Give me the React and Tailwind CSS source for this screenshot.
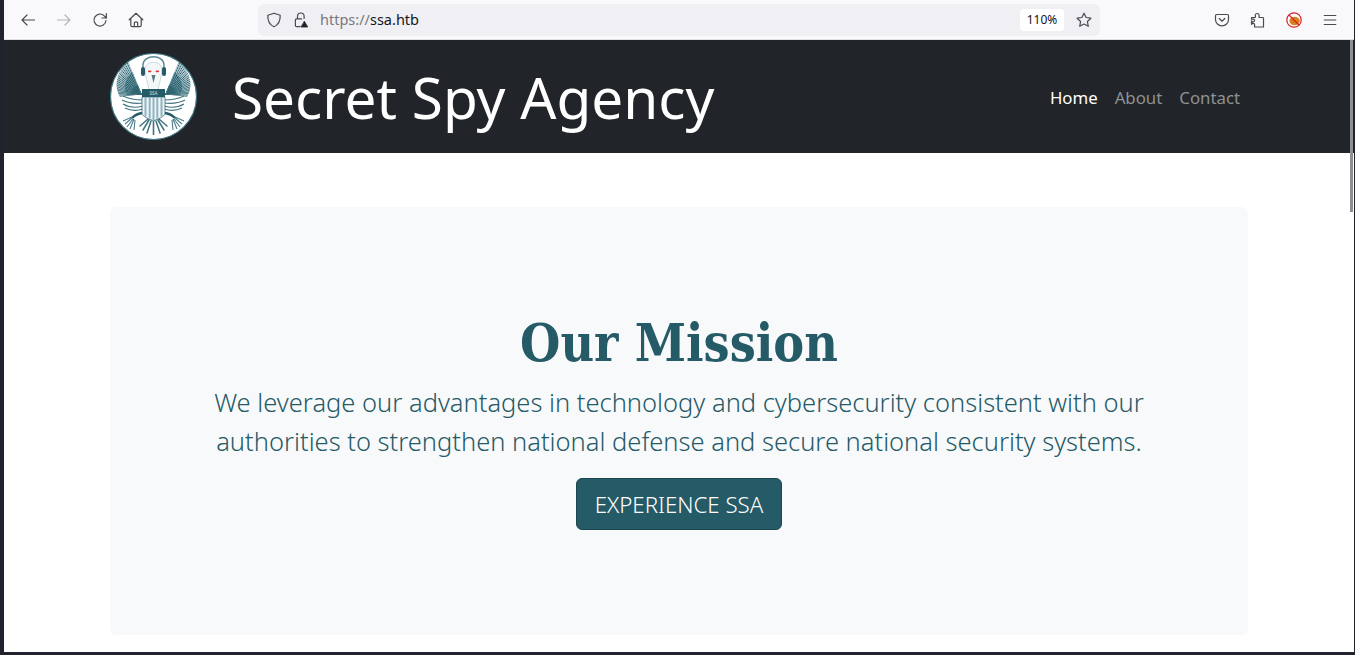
import React from "react";

const S = { fontFamily: '"Noto Sans", sans-serif' };

function wing() {
  const out = [];
  const bx = 31, by = 41;
  const layers = [
    { n: 20, a0: 186, a1: 112, len: (k) => 21 + 13 * k, w: 1.0, c: ["#2f6573", "#a3c0c8"] },
    { n: 14, a0: 180, a1: 112, len: (k) => 14 + 9 * k, w: 1.0, c: ["#1f5361", "#6d99a4"] },
    { n: 9, a0: 175, a1: 112, len: () => 9, w: 1.1, c: ["#255a67", "#3f7480"] },
  ];
  layers.forEach((l, li) => {
    for (let i = 0; i < l.n * 2; i++) {
      const k = i / (l.n * 2 - 1);
      const a = ((l.a0 + (l.a1 - l.a0) * k) * Math.PI) / 180;
      const L = l.len(k);
      const x = bx + Math.cos(a) * L;
      const y = by - Math.sin(a) * L;
      out.push(<line key={`${li}-${i}`} x1={bx} y1={by} x2={x.toFixed(2)} y2={y.toFixed(2)} stroke={l.c[i % 2]} strokeWidth={l.w} strokeLinecap="round" />);
    }
  });
  return out;
}

function Eagle() {
  const t = "#255a67";
  const w = wing();
  const side = (
    <g>
      {w}
      <path d="M33 47 C26 47 19 46 13 43 M33 50 C25 51 18 50 12 47 M33 53 C26 55 18 54 13 51 M33 56 C27 58 21 58 15 55" fill="none" stroke="#3f7480" strokeWidth="1.2" />
      <path d="M34 60 C29 60 25 62 22 65" fill="none" stroke={t} strokeWidth="2.4" />
      <path d="M22 64 L13 68 M22 65 L15 71 M23 66 L17 74 M24 66 L20 76 M25 67 L24 77" stroke="#4b7d89" strokeWidth="1.1" />
      <path d="M38 66 L30 73 M39 67 L33 77 M41 68 L37 80" stroke="#3f7480" strokeWidth="1.5" strokeLinecap="round" />
    </g>
  );
  return (
    <svg viewBox="0 0 87 87" className="w-[87px] h-[87px] shrink-0">
      <circle cx="43.5" cy="43.5" r="43" fill="#fff" stroke="#3f7480" strokeWidth="1.2" />
      {side}
      <g transform="matrix(-1 0 0 1 87 0)">{side}</g>
      <path d="M43.5 68 V82" stroke="#3f7480" strokeWidth="1.6" />
      <path d="M33 12 C33 1 54 1 54 12 V17" fill="none" stroke="#5f8a95" strokeWidth="1.5" />
      <path d="M33 12 V17" stroke="#5f8a95" strokeWidth="1.5" />
      <path d="M35 16 C36 7 51 7 52 16 C52 24 49 30 48 37 L39 37 C38 30 35 24 35 16 Z" fill="#f4f7f8" stroke="#b8ccd1" strokeWidth=".7" />
      <rect x="31" y="14" width="4" height="9" rx="2" fill={t} />
      <rect x="52" y="14" width="4" height="9" rx="2" fill={t} />
      <rect x="38" y="17.5" width="3.4" height="1.8" rx=".8" fill="#e2343c" />
      <rect x="45.6" y="17.5" width="3.4" height="1.8" rx=".8" fill="#e2343c" />
      <path d="M41.5 22 L45.5 22 L43.5 30 Z" fill="#5d7780" />
      <rect x="32" y="36" width="23" height="8" fill={t} />
      <text x="43.5" y="42" textAnchor="middle" fontSize="4.6" fill="#cfe0e4" style={S}>SSA</text>
      <path d="M32 44 H55 V60 C55 64 47 66 43.5 68 C40 66 32 64 32 60 Z" fill="#eef4f6" stroke={t} strokeWidth=".7" />
      <path d="M35.5 44 V63.5 M39.7 44 V65.5 M43.5 44 V67.5 M47.3 44 V65.5 M51.5 44 V63.5" stroke="#8fb4c0" strokeWidth="2" />
    </svg>
  );
}

const Ico = ({ children, className = "" }) => (
  <svg viewBox="0 0 16 16" fill="none" stroke="#4a4a4f" strokeWidth="1.2" strokeLinecap="round" strokeLinejoin="round" className={`w-4 h-4 shrink-0 ${className}`}>
    {children}
  </svg>
);

function Toolbar() {
  return (
    <div className="h-[39px] bg-[#f9f9fb] flex items-center pl-4 border-b border-[#e0e0e2] box-content shrink-0">
      <div className="flex items-center gap-5 w-[132px]">
        <Ico><path d="M14.5 8H2M7 3 2 8l5 5" /></Ico>
        <Ico><path d="M1.5 8H14M9 3l5 5-5 5" stroke="#b4b4b8" /></Ico>
        <Ico><path d="M14 8.5a6 6 0 1 1-1.7-4.7L14.2 6M14.4 1.5V6H10" /></Ico>
        <Ico><path d="M1.2 7.8 8 1.3l6.8 6.5M2.8 6.6v6.7c0 .8.5 1.4 1.4 1.4h7.6c.9 0 1.4-.6 1.4-1.4V6.6M6.3 14.7v-3.4c0-2 3.4-2 3.4 0v3.4" /></Ico>
      </div>
      <div className="ml-[106px] w-[842px] h-[32px] bg-[#f0f0f4] rounded-md flex items-center pl-2 pr-2">
        <Ico><path d="M8 1.2 14.2 3.2c.2 5.4-1.3 9.4-6.2 11.6-4.9-2.2-6.4-6.2-6.2-11.6Z" /></Ico>
        <Ico className="ml-[11px]"><path d="M4.5 7V4.3a3.3 3.3 0 0 1 6.6 0V6.5M7 14.6H3.6c-.8 0-1.2-.4-1.2-1.1V8c0-.7.4-1.1 1.2-1.1h5" /><path d="M11.5 9.5 14.7 15H8.3Z" fill="#222" stroke="#222" strokeWidth=".8" /></Ico>
        <span className="ml-[11px] text-[14.5px] text-[#77777c] leading-none" style={S}>https://<span className="text-[#15141a]">ssa.htb</span></span>
        <div className="ml-auto flex items-center gap-3">
          <span className="w-[44px] h-[22px] bg-white rounded flex items-center justify-center text-[12px] text-[#15141a]" style={S}>110%</span>
          <Ico><path d="m8 1.2 2.1 4.3 4.8.7-3.5 3.3.9 4.8L8 12l-4.3 2.3.9-4.8L1.1 6.2l4.8-.7Z" /></Ico>
        </div>
      </div>
      <div className="flex items-center ml-[114px]">
        <Ico><path d="M2.8 2.5h10.4c.8 0 1.3.5 1.3 1.3v3.6a6.5 6.5 0 0 1-13 0V3.8c0-.8.5-1.3 1.3-1.3ZM5.2 6.5 8 9.2l2.8-2.7" /></Ico>
        <Ico className="ml-[20px]"><path d="M1.5 5.5h3.8V3.4a1.9 1.9 0 0 1 3.8 0v2.1h3.6c.5 0 .8.3.8.8V15H4.6v-2.1a1.6 1.6 0 0 0-3.1-.4V8.8a1.6 1.6 0 0 0 3.1-.3c0-1.6-1.7-1.7-3.1-1.2Z" /></Ico>
        <svg viewBox="0 0 16 16" className="w-4 h-4 ml-[20px] shrink-0">
          <circle cx="8" cy="8" r="7.2" fill="#fff" stroke="#d8202a" strokeWidth="1.2" />
          <ellipse cx="8.6" cy="9" rx="5.2" ry="4.2" fill="#d9821d" />
          <path d="M3 3 13 13" stroke="#d8202a" strokeWidth="1.3" />
        </svg>
        <Ico className="ml-[20px]"><path d="M2.2 3.5h11.6M2.2 8h11.6M2.2 12.5h11.6" /></Ico>
      </div>
    </div>
  );
}

export default function App() {
  return (
    <div className="w-[1355px] h-[655px] bg-[#20232d] overflow-hidden flex flex-col pl-1 pr-px" style={S}>
      <Toolbar />
      <div className="flex-1 min-h-0 flex flex-col bg-white mb-[3px] relative">
        <header className="h-[113px] shrink-0 bg-[#212529] flex items-center pl-[106px] pr-[114px]">
          <Eagle />
          <span className="ml-[35px] text-[56.7px] leading-none text-white pt-[2px]">Secret Spy Agency</span>
          <nav className="ml-auto flex gap-[17px] text-[16.8px] pt-[2px]">
            <span className="text-white">Home</span>
            <span className="text-[#8f9193]">About</span>
            <span className="text-[#8f9193]">Contact</span>
          </nav>
        </header>
        <main className="flex-1 pt-[54px] pl-[106px]">
          <section className="h-[428px] w-[1138px] bg-[#f8f9fa] rounded-md flex flex-col items-center pt-[104px] text-[#255a67]">
            <h1 className="text-[51.5px] leading-[64px] font-bold" style={{ fontFamily: '"DejaVu Serif Condensed", "DejaVu Serif", serif', fontStretch: "condensed" }}>Our Mission</h1>
            <p className="mt-[8px] text-[25.5px] leading-[39px] text-center w-[960px] font-light">
              We leverage our advantages in technology and cybersecurity consistent with our authorities to strengthen national defense and secure national security systems.
            </p>
            <button className="mt-[17px] h-[52px] px-[17.5px] rounded-md bg-[#255a67] border border-[#1c4752] text-white text-[22.25px] font-light pt-[2px]">EXPERIENCE SSA</button>
          </section>
        </main>
        <div className="absolute right-px top-0 w-[3px] h-[172px] bg-[#8f8f92]" />
      </div>
    </div>
  );
}
